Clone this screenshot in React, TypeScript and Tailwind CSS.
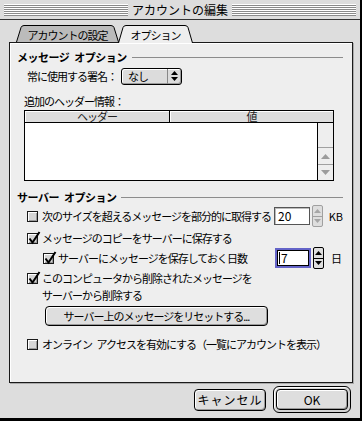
const label = 'whitespace-nowrap text-[11px] leading-[14px] tracking-[-1px]'
const bevel = 'shadow-[inset_1px_1px_0_#ffffff,inset_-1px_-1px_0_#9a9a9a]'

function Tab({ text, width, active, className = '' }: { text: string; width: number; active?: boolean; className?: string }) {
  const h = active ? 18 : 17
  const d = `M0.5 ${h} L5 2.5 Q5.8 0.5 8 0.5 L${width - 8} 0.5 Q${width - 5.8} 0.5 ${width - 5} 2.5 L${width - 0.5} ${h}`
  return (
    <div className={`relative flex h-[18px] items-center justify-center pt-[1px] ${className}`} style={{ width }}>
      <svg className="absolute left-0 top-0" width={width} height={h}>
        <path d={d} fill={active ? '#eeeeee' : '#bbbbbb'} stroke="#000" strokeWidth="1" />
      </svg>
      <span className={`relative ${label}`}>{text}</span>
    </div>
  )
}

function Section({ title, className = '' }: { title: string; className?: string }) {
  return (
    <div className={`flex h-[14px] items-center ${className}`}>
      <span className="whitespace-pre text-[11px] font-bold leading-[14px] tracking-[-0.5px]">{title}</span>
      <div className="ml-[5px] h-px flex-1 bg-[#8c8c8c]" />
    </div>
  )
}

function Checkbox({ checked }: { checked?: boolean }) {
  return (
    <span className={`relative inline-block h-[11px] w-[11px] shrink-0 border border-[#1a1a1a] bg-[#d6d6d6] ${bevel}`}>
      {checked && (
        <svg className="absolute -left-[1px] -top-[3px]" width="14" height="14" viewBox="0 0 14 14">
          <path d="M2.5 7.5 L5.5 11.5 L12.5 1" fill="none" stroke="#000" strokeWidth="2" />
        </svg>
      )}
    </span>
  )
}

function Spinner({ active }: { active?: boolean }) {
  const c = active ? '#000' : '#a6a6a6'
  return (
    <div className={`ml-[2px] flex h-[22px] w-[11px] flex-col rounded-[2px] border bg-[#dedede] ${active ? 'border-black' : 'border-[#a0a0a0]'}`}>
      <div className={`flex flex-1 items-center justify-center border-b ${active ? 'border-black' : 'border-[#a0a0a0]'}`}>
        <svg width="7" height="4">
          <path d="M3.5 0 L7 4 L0 4Z" fill={c} />
        </svg>
      </div>
      <div className="flex flex-1 items-center justify-center">
        <svg width="7" height="4">
          <path d="M0 0 L7 0 L3.5 4Z" fill={c} />
        </svg>
      </div>
    </div>
  )
}

function Arrow({ down }: { down?: boolean }) {
  return (
    <svg width="9" height="5">
      <path d={down ? 'M0 0 L9 0 L4.5 5Z' : 'M4.5 0 L9 5 L0 5Z'} fill="#9c9c9c" />
    </svg>
  )
}

export default function App() {
  return (
    <div className="flex h-[421px] w-[362px] flex-col overflow-hidden border-b-[3px] border-r-2 border-black bg-[#dddddd] font-['Noto_Sans_CJK_JP','Noto_Sans',sans-serif] text-black">
      {/* title bar */}
      <div className="flex h-[19px] shrink-0 items-center gap-[4px] px-[4px]">
        <div className="h-[12px] flex-1 bg-[repeating-linear-gradient(to_bottom,#ffffff_0px,#ffffff_1px,#8a8a8a_1px,#8a8a8a_2px)]" />
        <span className="whitespace-nowrap text-[12px] leading-none">アカウントの編集</span>
        <div className="h-[12px] flex-1 bg-[repeating-linear-gradient(to_bottom,#ffffff_0px,#ffffff_1px,#8a8a8a_1px,#8a8a8a_2px)]" />
      </div>
      <div className="h-px shrink-0 bg-[#333333]" />

      <div className="flex flex-1 flex-col pl-[9px] pr-[7px] pt-[5px]">
        <div className="relative z-10 flex h-[18px] pl-[7px]">
          <Tab text="アカウントの設定" width={103} />
          <Tab text="オプション" width={75} active className="-ml-[1px]" />
        </div>

        <div className="-mt-px flex h-[341px] w-[344px] flex-col border border-[#1a1a1a] bg-[#eeeeee] pl-[7px] pr-[9px] shadow-[inset_1px_1px_0_#ffffff,1px_1px_0_#aaaaaa]">
          <Section title={'メッセージ\u2002オプション'} className="mt-[7px]" />

          <div className="ml-[10px] mt-[3px] flex h-[18px] items-center">
            <span className={`w-[94px] ${label}`}>常に使用する署名：</span>
            <div className={`flex h-[17px] w-[61px] rounded-[3px] border border-black bg-[#dcdcdc] ${bevel}`}>
              <span className={`flex-1 pl-[6px] ${label}`}>なし</span>
              <span className="flex w-[14px] items-center justify-center border-l border-[#888888]">
                <svg width="7" height="10">
                  <path d="M3.5 0 L7 4 L0 4Z M0 6 L7 6 L3.5 10Z" fill="#000" />
                </svg>
              </span>
            </div>
          </div>

          <div className={`ml-[7px] mt-[9px] h-[14px] ${label}`}>追加のヘッダー情報：</div>

          <div className="ml-[7px] mt-[2px] flex h-[71px] w-[310px] flex-col border border-black bg-white">
            <div className="flex h-[12px] border-b border-black bg-[#dddddd] text-[11px] leading-[11px] tracking-[-1px] text-[#222222]">
              <div className="flex w-[145px] items-center justify-center border-r border-black shadow-[inset_1px_1px_0_#ffffff]">ヘッダー</div>
              <div className="flex flex-1 items-center justify-center shadow-[inset_1px_1px_0_#ffffff]">値</div>
            </div>
            <div className="flex flex-1">
              <div className="flex-1" />
              <div className="flex w-[16px] flex-col border-l border-black bg-[#eeeeee]">
                <div className="flex-1" />
                <div className="flex h-[17px] items-center justify-center border-t border-[#a0a0a0]">
                  <Arrow />
                </div>
                <div className="flex h-[16px] items-center justify-center border-t border-[#a0a0a0]">
                  <Arrow down />
                </div>
              </div>
            </div>
          </div>

          <Section title={'サーバー\u2002オプション'} className="mt-[9px]" />

          <div className="ml-[10px] mt-[1px] flex h-[22px] items-center">
            <Checkbox />
            <span className={`ml-[4px] w-[234px] ${label}`}>次のサイズを超えるメッセージを部分的に取得する</span>
            <div className="flex h-[18px] w-[36px] items-center border border-[#555555] bg-white pl-[3px] text-[12px] leading-none shadow-[inset_1px_1px_0_#bbbbbb]">
              20
            </div>
            <Spinner />
            <span className="ml-[6px] text-[11px] leading-none">KB</span>
          </div>

          <div className="ml-[10px] mt-[4px] flex h-[14px] items-center">
            <Checkbox checked />
            <span className={`ml-[4px] ${label}`}>メッセージのコピーをサーバーに保存する</span>
          </div>

          <div className="ml-[26px] mt-[2px] flex h-[22px] items-center">
            <Checkbox checked />
            <span className={`ml-[4px] w-[217px] ${label}`}>サーバーにメッセージを保存しておく日数</span>
            <div className="h-[20px] w-[36px] border-2 border-[#6464c8]">
              <div className="flex h-full items-center border border-black bg-white pl-[1px] text-[12px] leading-none">
                <span className="mr-[1px] h-[12px] w-px bg-black" />7
              </div>
            </div>
            <Spinner active />
            <span className={`ml-[7px] ${label}`}>日</span>
          </div>

          <div className="ml-[10px] mt-[2px] flex h-[14px] items-center">
            <Checkbox checked />
            <span className={`ml-[4px] ${label}`}>このコンピュータから削除されたメッセージを</span>
          </div>
          <div className={`ml-[25px] mt-[3px] h-[14px] ${label}`}>サーバーから削除する</div>

          <button className={`ml-[28px] mt-[4px] flex h-[20px] w-[223px] items-center justify-center rounded-[4px] border border-black bg-[#dedede] ${bevel} ${label}`}>
            サーバー上のメッセージをリセットする...
          </button>

          <div className="ml-[10px] mt-[11px] flex h-[14px] items-center">
            <Checkbox />
            <span className={`ml-[4px] whitespace-pre ${label}`}>{'オンライン\u2002アクセスを有効にする（一覧にアカウントを表示）'}</span>
          </div>
        </div>

        <div className="mr-[2px] mt-[3px] flex items-center justify-end gap-[7px]">
          <button className={`flex h-[22px] w-[72px] items-center justify-center rounded-[4px] border border-black bg-[#dedede] text-[12px] leading-none tracking-[1px] ${bevel}`}>
            キャンセル
          </button>
          <div className="rounded-[6px] border border-black bg-[#d4d4d4] p-[2px] shadow-[inset_1px_1px_0_#ffffff]">
            <button className={`flex h-[21px] w-[72px] items-center justify-center rounded-[4px] border border-black bg-[#dedede] text-[12px] leading-none ${bevel}`}>
              OK
            </button>
          </div>
        </div>
      </div>
    </div>
  )
}
